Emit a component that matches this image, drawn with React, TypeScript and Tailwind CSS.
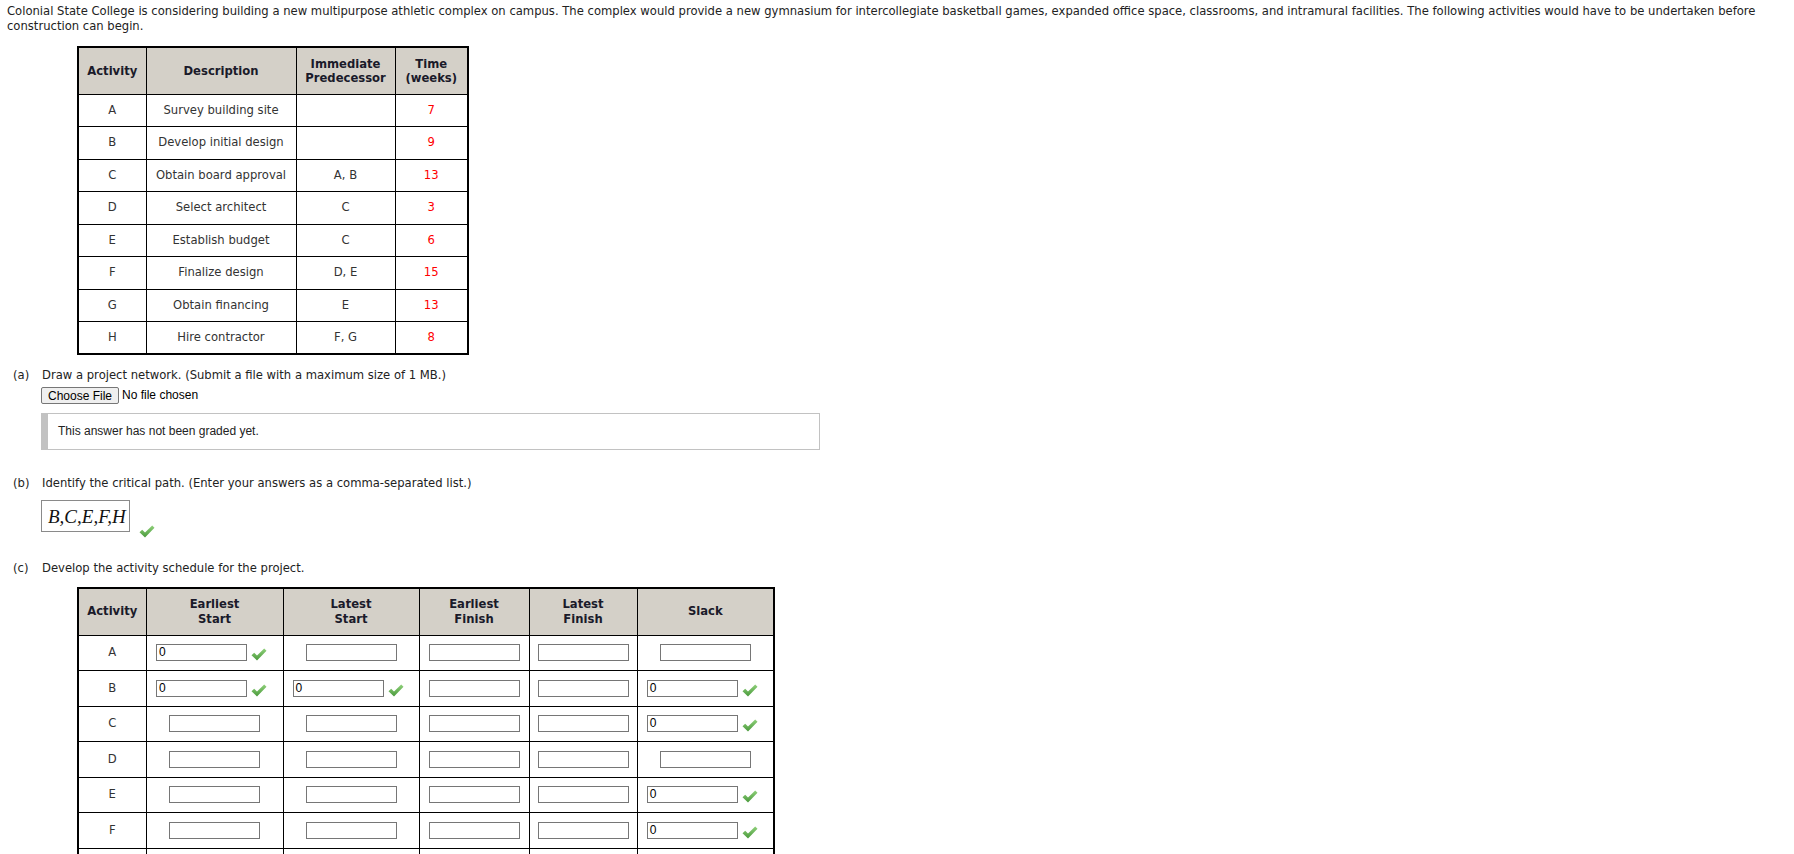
const activities = [
  { id: "A", desc: "Survey building site", pred: "", time: "7" },
  { id: "B", desc: "Develop initial design", pred: "", time: "9" },
  { id: "C", desc: "Obtain board approval", pred: "A, B", time: "13" },
  { id: "D", desc: "Select architect", pred: "C", time: "3" },
  { id: "E", desc: "Establish budget", pred: "C", time: "6" },
  { id: "F", desc: "Finalize design", pred: "D, E", time: "15" },
  { id: "G", desc: "Obtain financing", pred: "E", time: "13" },
  { id: "H", desc: "Hire contractor", pred: "F, G", time: "8" },
];

// null = empty box, "0" = answered & correct
const schedule: Record<string, (string | null)[]> = {
  A: ["0", null, null, null, null],
  B: ["0", "0", null, null, "0"],
  C: [null, null, null, null, "0"],
  D: [null, null, null, null, null],
  E: [null, null, null, null, "0"],
  F: [null, null, null, null, "0"],
  G: [null, null, null, null, null],
  H: [null, null, null, null, null],
};

function Check() {
  return (
    <svg width="16" height="13" viewBox="0 0 16 13" className="shrink-0">
      <defs>
        <linearGradient id="chk" x1="0" y1="0" x2="0" y2="1">
          <stop offset="0" stopColor="#8fd07a" />
          <stop offset="1" stopColor="#4a9a3c" />
        </linearGradient>
      </defs>
      <path d="M0.5 7.2 L3.2 4.8 L6 7.4 L13.2 0.6 L15.5 2.8 L6 12.4 Z" fill="url(#chk)" />
    </svg>
  );
}

function Box({ value }: { value: string | null }) {
  if (value === null) {
    return (
      <div className="flex justify-center">
        <div className="h-[17px] w-[91px] border border-[#767676] bg-white" />
      </div>
    );
  }
  return (
    <div className="flex items-center justify-center gap-[4px] pr-[6px]">
      <div className="flex h-[17px] w-[91px] items-center border border-[#767676] bg-white pl-[2px] font-['Liberation_Sans',sans-serif] text-[12px] text-black">
        {value}
      </div>
      <div className="pt-[4px]">
        <Check />
      </div>
    </div>
  );
}

export default function App() {
  return (
    <div className="min-h-screen bg-white pl-[7px] pt-[4px] font-['DejaVu_Sans',sans-serif] text-[11.6px] leading-[15px] text-[#222]">
      <p className="pr-[4px]">
        Colonial State College is considering building a new multipurpose athletic complex on campus. The complex
        would provide a new gymnasium for intercollegiate basketball games, expanded office space, classrooms, and
        intramural facilities. The following activities would have to be undertaken before construction can begin.
      </p>

      <table className="ml-[70px] mt-[12px] w-[390px] table-fixed border-collapse border-2 border-black text-center">
        <colgroup>
          <col className="w-[68px]" />
          <col className="w-[150px]" />
          <col className="w-[99px]" />
          <col className="w-[73px]" />
        </colgroup>
        <thead>
          <tr className="h-[47px] bg-[#d4d0c8] font-bold leading-[14px] text-[#1a1a2a]">
            <th className="border border-black">Activity</th>
            <th className="border border-black">Description</th>
            <th className="border border-black">
              Immediate
              <br />
              Predecessor
            </th>
            <th className="border border-black">
              Time
              <br />
              (weeks)
            </th>
          </tr>
        </thead>
        <tbody className="text-[#333]">
          {activities.map((a) => (
            <tr key={a.id} className="h-[32.5px]">
              <td className="border border-black">{a.id}</td>
              <td className="border border-black">{a.desc}</td>
              <td className="border border-black">{a.pred}</td>
              <td className="border border-black text-[#ff0000]">{a.time}</td>
            </tr>
          ))}
        </tbody>
      </table>

      <div className="mt-[13px] flex">
        <span className="w-[35px] pl-[6px]">(a)</span>
        <span>Draw a project network. (Submit a file with a maximum size of 1 MB.)</span>
      </div>
      <div className="ml-[34px] mt-[4px] flex items-center font-['Liberation_Sans',sans-serif] text-[12px] text-black">
        <button
          type="button"
          className="h-[17px] rounded-[2px] border border-[#767676] bg-[#efefef] px-[6px] leading-[14px]"
        >
          Choose File
        </button>
        <span className="ml-[3px]">No file chosen</span>
      </div>
      <div className="ml-[34px] mt-[9px] flex h-[37px] w-[779px] items-center border border-l-[7px] border-[#c2c2c2] pl-[10px] font-['Liberation_Sans',sans-serif] text-[12px] text-[#222]">
        This answer has not been graded yet.
      </div>

      <div className="mt-[26px] flex">
        <span className="w-[35px] pl-[6px]">(b)</span>
        <span>Identify the critical path. (Enter your answers as a comma-separated list.)</span>
      </div>
      <div className="ml-[34px] mt-[9px] flex items-end">
        <div className="flex h-[32px] w-[89px] items-center border border-[#8a8a8a] pl-[6px] font-['Liberation_Serif',serif] text-[19px] italic text-[#111]">
          B,C,E,F,H
        </div>
        <div className="mb-[-6px] ml-[9px]">
          <Check />
        </div>
      </div>

      <div className="mt-[29px] flex">
        <span className="w-[35px] pl-[6px]">(c)</span>
        <span>Develop the activity schedule for the project.</span>
      </div>

      <table className="ml-[70px] mt-[11px] w-[696px] table-fixed border-collapse border-2 border-black text-center">
        <colgroup>
          <col className="w-[68px]" />
          <col className="w-[137px]" />
          <col className="w-[136px]" />
          <col className="w-[110px]" />
          <col className="w-[108px]" />
          <col className="w-[137px]" />
        </colgroup>
        <thead>
          <tr className="h-[47px] bg-[#d4d0c8] font-bold leading-[15px] text-[#1a1a2a]">
            <th className="border border-black">Activity</th>
            <th className="border border-black">
              Earliest
              <br />
              Start
            </th>
            <th className="border border-black">
              Latest
              <br />
              Start
            </th>
            <th className="border border-black">
              Earliest
              <br />
              Finish
            </th>
            <th className="border border-black">
              Latest
              <br />
              Finish
            </th>
            <th className="border border-black">Slack</th>
          </tr>
        </thead>
        <tbody className="text-[#333]">
          {activities.map((a) => (
            <tr key={a.id} className="h-[35.5px]">
              <td className="border border-black">{a.id}</td>
              {schedule[a.id].map((v, i) => (
                <td key={i} className="border border-black">
                  <Box value={v} />
                </td>
              ))}
            </tr>
          ))}
        </tbody>
      </table>
    </div>
  );
}
